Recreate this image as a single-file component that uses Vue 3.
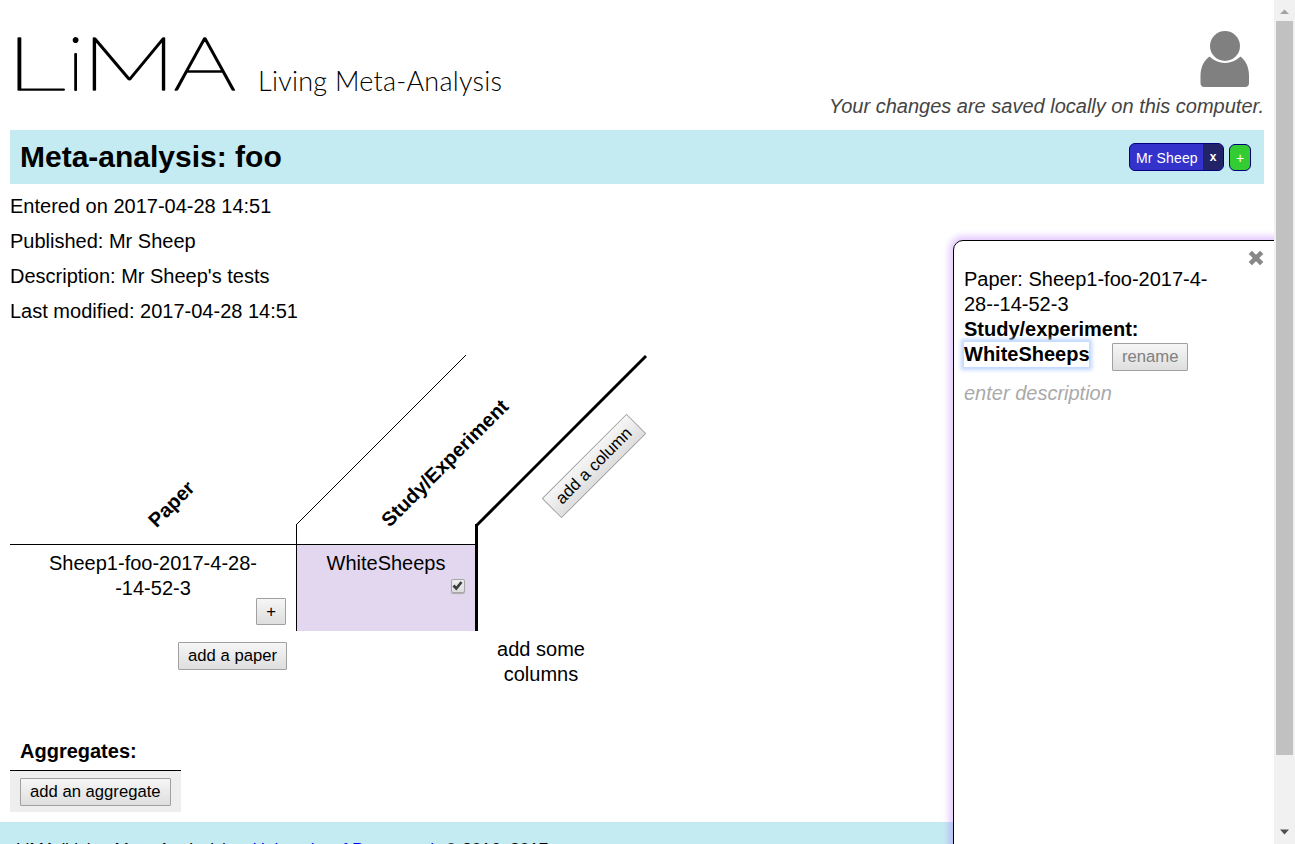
<script setup>
import { ref } from 'vue'

const details = [
  'Entered on 2017-04-28 14:51',
  'Published: Mr Sheep',
  "Description: Mr Sheep's tests",
  'Last modified: 2017-04-28 14:51',
]
const included = ref(true)
</script>

<template>
  <div class="window">
    <div class="page">
      <header class="top">
        <div class="brand">
          <svg class="logo" width="240" height="80" viewBox="0 0 240 80" role="img" aria-label="LiMA">
            <g class="logo-text">
              <text transform="translate(-5.500 70) scale(1.640 1)">L</text>
              <text transform="translate(58.200 70) scale(.95 1)">i</text>
              <text transform="translate(71.500 70) scale(1.430 1)">M</text>
              <text transform="translate(163.500 70) scale(1.320 1)">A</text>
            </g>
          </svg>
          <svg class="tagline" width="260" height="50" viewBox="0 0 260 50">
            <text x="0" y="31" textLength="244" lengthAdjust="spacing">Living Meta-Analysis</text>
          </svg>
        </div>
        <div class="account">
          <svg width="50" height="57" viewBox="0 0 50 57" fill="#808080">
            <circle cx="25" cy="15" r="15" />
            <path d="M9.500 25.500 C2 31 .5 39 .5 45 V52 Q.5 56 4.500 56 H45 Q49 56 49 52 V45 C49 39 47.500 31 40.500 25.500 C32 34 18 34 9.500 25.500Z" />
          </svg>
          <p>Your changes are saved locally on this computer.</p>
        </div>
      </header>

      <div class="title-bar">
        <h1>Meta-analysis: foo</h1>
        <div class="tags">
          <span class="tag"><span class="tag-name">Mr Sheep</span><span class="tag-x">x</span></span>
          <span class="tag-add">+</span>
        </div>
      </div>

      <section class="details">
        <p v-for="line in details" :key="line">{{ line }}</p>
      </section>

      <section class="experiments">
        <div class="heads">
          <svg width="660" height="190" viewBox="0 0 660 190">
            <line x1="286.500" y1="169.500" x2="456" y2="0" stroke="#000" stroke-width="1" />
            <line x1="467" y1="170" x2="636" y2="1" stroke="#000" stroke-width="3" />
            <text transform="translate(146.500 173.500) rotate(-45)">Paper</text>
            <text transform="translate(379.500 173) rotate(-45)">Study/Experiment</text>
          </svg>
          <button class="btn add-column">add a column</button>
        </div>
        <div class="row">
          <div class="paper">
            <span>Sheep1-foo-2017-4-28-<br>-14-52-3</span>
            <button class="btn plus">+</button>
          </div>
          <div class="study">
            <span>WhiteSheeps</span>
            <button class="check" @click="included = !included">
              <svg v-if="included" width="11" height="11" viewBox="0 0 11 11">
                <path d="M1.500 5.500 L4.300 8.500 L9.500 2" fill="none" stroke="#3c3c3c" stroke-width="2.700" />
              </svg>
            </button>
          </div>
        </div>
        <div class="row foot">
          <div class="foot-left"><button class="btn">add a paper</button></div>
          <div class="hint">add some columns</div>
        </div>
      </section>

      <section class="aggregates">
        <h2>Aggregates:</h2>
        <div class="aggregate-add"><button class="btn">add an aggregate</button></div>
      </section>

      <footer>LiMA (Living Meta-Analysis) at <a>University of Portsmouth</a> © 2016–2017</footer>

      <aside class="panel">
        <svg class="close" width="16" height="16" viewBox="0 0 16 16">
          <path d="M2.300 2.300 L13.700 13.700 M13.700 2.300 L2.300 13.700" stroke="#888" stroke-width="4.600" />
        </svg>
        <p>Paper: Sheep1-foo-2017-4-<br>28--14-52-3</p>
        <p class="strong">Study/experiment:</p>
        <div class="name-row">
          <span class="name">WhiteSheeps</span>
          <button class="btn rename">rename</button>
        </div>
        <p class="placeholder">enter description</p>
      </aside>
    </div>

    <div class="scrollbar">
      <svg width="21" height="21" viewBox="0 0 21 21"><path d="M6 14 L10.500 9.500 L15 14Z" fill="#a3a3a3" /></svg>
      <div class="thumb"></div>
      <svg class="down" width="21" height="21" viewBox="0 0 21 21"><path d="M6 7.500 H15 L10.500 12.500Z" fill="#505050" /></svg>
    </div>
  </div>
</template>

<style>
body {
  overflow: hidden;
  background: #fff;
}
</style>

<style scoped>
* {
  box-sizing: border-box;
}
.window {
  display: flex;
  width: 1295px;
  height: 844px;
  overflow: hidden;
  font: 20px/25px "Liberation Sans", Arial, sans-serif;
  color: #000;
}
p, h1, h2 {
  margin: 0;
}
.page {
  position: relative;
  width: 1274px;
  height: 844px;
  overflow: hidden;
}
.top {
  display: flex;
  justify-content: space-between;
  height: 130px;
  padding: 0 10px;
}
.brand {
  display: flex;
  padding-top: 20px;
}
.logo {
  overflow: visible;
}
.logo-text {
  font-family: Lato, sans-serif;
  font-weight: 100;
  font-size: 74.500px;
}
.logo-text text {
  stroke: #000;
  stroke-width: 2px;
  stroke-linejoin: round;
  vector-effect: non-scaling-stroke;
}
.tagline {
  margin: 40px 0 0 8px;
  font-family: Lato, sans-serif;
  font-weight: 300;
  font-size: 27px;
}
.account {
  display: flex;
  flex-direction: column;
  align-items: flex-end;
  padding-top: 31px;
}
.account svg {
  margin-right: 14px;
}
.account p {
  margin-top: 6px;
  font-style: italic;
  color: #444;
}
.title-bar {
  display: flex;
  justify-content: space-between;
  height: 54px;
  margin: 0 10px;
  padding: 0 13px 0 10px;
  background: #c4ebf1;
}
h1 {
  font-size: 30px;
  line-height: 53px;
}
.tags {
  display: flex;
  align-items: center;
  gap: 5px;
  font-size: 14px;
  line-height: 26px;
  color: #fff;
}
.tag {
  display: flex;
  width: 95px;
  height: 28px;
  border: 1px solid #000080;
  border-radius: 6px;
  overflow: hidden;
  background: #3333cc;
}
.tag-name {
  width: 73px;
  padding-left: 6px;
  line-height: 28px;
  letter-spacing: 0.130px;
}
.tag-x {
  flex: 1;
  text-align: center;
  background: #222266;
  font-size: 12px;
  font-weight: bold;
}
.tag-add {
  width: 22px;
  height: 27px;
  border: 1px solid #000080;
  border-radius: 6px;
  background: #33cc33;
  text-align: center;
  line-height: 27px;
}
.details {
  padding: 10px 10px 0;
}
.details p {
  margin-bottom: 10px;
}
.experiments {
  margin: 31px 10px 0;
}
.heads {
  position: relative;
  height: 189px;
}
.heads svg {
  display: block;
  font-weight: bold;
  overflow: visible;
}
.btn {
  height: 28px;
  padding: 0 9px;
  border: 1px solid #a0a0a0;
  border-radius: 1px;
  background: linear-gradient(#f6f6f6, #dedede);
  font: 16.670px/24px "Liberation Sans", Arial, sans-serif;
  color: #000;
  white-space: nowrap;
}
.add-column {
  position: absolute;
  left: 524px;
  top: 97px;
  width: 120px;
  transform: rotate(-45deg);
}
.row {
  display: flex;
}
.paper {
  display: flex;
  flex-direction: column;
  width: 286px;
  height: 87px;
  padding: 6px 10px 0 10px;
  border-top: 1px solid #000;
  text-align: center;
}
.plus {
  align-self: flex-end;
  width: 30px;
  margin-top: -3px;
  height: 27px;
  padding: 0;
}
.study {
  display: flex;
  flex-direction: column;
  width: 182px;
  height: 107px;
  margin-top: -20px;
  padding: 27px 10px 0;
  border-left: 1px solid #000;
  border-right: 3px solid #000;
  background: linear-gradient(#000, #000) 0 20px / 100% 1px no-repeat,
    linear-gradient(#e3d7f0, #e3d7f0) 0 21px / 100% 90px no-repeat;
  text-align: center;
}
.check {
  display: flex;
  align-self: flex-end;
  width: 14px;
  height: 14px;
  margin: 3px 0 0 0;
  padding: 0;
  border: 1px solid #a6a6a6;
  border-radius: 2px;
  background: linear-gradient(#eee, #ddd);
  box-shadow: 0 1px 1px #aaa;
}
.check svg {
  flex: none;
}
.foot-left {
  display: flex;
  justify-content: flex-end;
  width: 277px;
  padding-top: 11px;
}
.hint {
  width: 108px;
  margin-left: 200px;
  padding: 6px 0 0;
  text-align: center;
}
.aggregates {
  width: 171px;
  margin: 51px 10px 0;
}
h2 {
  height: 33px;
  padding-left: 10px;
  font-size: 20px;
  line-height: 27px;
  border-bottom: 1px solid #000;
}
.aggregate-add {
  height: 41px;
  padding: 7px 10px 0;
  background: #eee;
  display: flex;
}
footer {
  height: 40px;
  margin-top: 10px;
  padding: 15px 16px 0;
  background: #c4ebf1;
  font-size: 17.230px;
  line-height: 24px;
  white-space: nowrap;
}
footer a {
  color: #00f;
}
.panel {
  position: absolute;
  left: 953px;
  top: 240px;
  width: 340px;
  height: 640px;
  padding: 26px 0 0 10px;
  border: 1px solid #000;
  border-radius: 10px 0 0 0;
  background: #fff;
  box-shadow: 0 0 6px 4px rgba(153, 51, 255, 0.250);
}
.close {
  position: absolute;
  left: 294px;
  top: 9px;
}
.strong, .name {
  font-weight: bold;
}
.name-row {
  display: flex;
  height: 30px;
}
.name {
  height: 25px;
  width: 125px;
  background: #fff;
  box-shadow: 0 0 4px 3px #bfd7ff;
}
.rename {
  width: 76px;
  margin: 1px 0 0 23px;
  color: #808080;
}
.placeholder {
  margin-top: 9px;
  font-style: italic;
  color: #a9a9a9;
}
.scrollbar {
  display: flex;
  flex-direction: column;
  width: 21px;
  background: #f1f1f1;
}
.thumb {
  width: 17px;
  height: 734px;
  margin-left: 2px;
  background: #c1c1c1;
}
.down {
  margin-top: 67px;
}
</style>
